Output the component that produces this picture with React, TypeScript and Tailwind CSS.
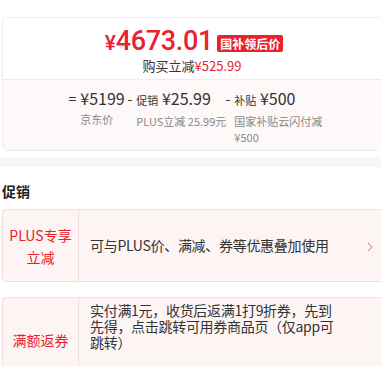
export default function App() {
  const font = { fontFamily: '"Noto Sans CJK SC", "Noto Sans", sans-serif' };
  return (
    <div className="h-[366px] w-[381px] overflow-hidden bg-white" style={font}>
      <div className="h-[17px]" />
      {/* price card */}
      <div className="ml-[2px] w-[380px] overflow-hidden rounded-[6px] border border-[#ececec]">
        <div className="flex h-[61px] flex-col items-center bg-white pt-[9px]">
          <div className="flex h-[30px] items-center gap-[4px] pl-[4px]">
            <span className="font-['Roboto',sans-serif] text-[27px] font-medium leading-[30px] tracking-[-0.3px] text-[#e8232f]">
              <span className="text-[21px]">¥</span>4673.01
            </span>
            <span className="mt-[2px] rounded-[2px] bg-[#e8232f] px-[3px] text-[12px] font-bold leading-[17px] text-white">
              国补领后价
            </span>
          </div>
          <div className="mt-[1px] text-[13px] leading-[16px] text-[#333]">
            购买立减<span className="text-[#e8232f]">¥525.99</span>
          </div>
        </div>
        <div className="flex h-[71px] justify-center border-t border-[#f3e9e9] bg-[#fdf9f9] pl-[2px] pt-[8px] text-[#333]">
          <div className="flex w-[59px] gap-[4px]">
            <span className="text-[14px] leading-[20px]">=</span>
            <div>
              <div className="text-[16px] leading-[20px]">¥5199</div>
              <div className="mt-[3px] text-[11px] leading-[16px] text-[#888]">京东价</div>
            </div>
          </div>
          <div className="flex w-[98px] gap-[4px]">
            <span className="text-[14px] leading-[20px]">-</span>
            <div>
              <div className="text-[16px] leading-[20px]">
                <span className="text-[11px]">促销</span> ¥25.99
              </div>
              <div className="mt-[3px] whitespace-nowrap text-[11px] leading-[16px] text-[#888]">PLUS立减 25.99元</div>
            </div>
          </div>
          <div className="flex w-[92px] gap-[4px]">
            <span className="text-[14px] leading-[20px]">-</span>
            <div>
              <div className="text-[16px] leading-[20px]">
                <span className="text-[11px]">补贴</span> ¥500
              </div>
              <div className="mt-[3px] w-[88px] text-[11px] leading-[16px] text-[#888]">国家补贴云闪付减¥500</div>
            </div>
          </div>
        </div>
      </div>
      <div className="mt-[6px] h-[10px] bg-[#f6f7fb]" />
      {/* promotions */}
      <div className="pl-[2px] pt-[14px] text-[14px] font-bold leading-[20px] text-[#222]">促销</div>
      <div className="ml-[2px] mt-[8px] flex h-[73px] w-[390px] rounded-[4px] border border-[#f3dede] bg-[#fdf4f4]">
        <div className="flex w-[76px] shrink-0 flex-col items-center justify-center border-r border-[#f3dede] text-[14px] leading-[22px] text-[#e8232f]">
          <span>PLUS专享</span>
          <span>立减</span>
        </div>
        <div className="flex flex-1 items-center pl-[11px] text-[14px] tracking-[-0.3px] text-[#333]">
          可与PLUS价、满减、券等优惠叠加使用
        </div>
        <div className="flex w-[24px] items-center pr-[10px] pt-[2px] text-[12px] text-[#c9a9ad]">
          <svg width="6" height="10" viewBox="0 0 6 10" fill="none" stroke="currentColor" strokeWidth="1.2">
            <path d="M1 1l4 4-4 4" />
          </svg>
        </div>
      </div>
      <div className="ml-[2px] mt-[15px] flex h-[80px] w-[390px] rounded-[4px] border border-[#f3dede] bg-[#fdf4f4]">
        <div className="flex w-[76px] shrink-0 items-center justify-center border-r border-[#f3dede] pt-[6px] text-[14px] text-[#e8232f]">
          满额返券
        </div>
        <div className="w-[262px] pl-[11px] pt-[4px] text-[14px] leading-[16px] tracking-[-0.3px] text-[#333]">
          实付满1元，收货后返满1打9折券，先到先得，点击跳转可用券商品页（仅app可跳转）
        </div>
      </div>
    </div>
  );
}
